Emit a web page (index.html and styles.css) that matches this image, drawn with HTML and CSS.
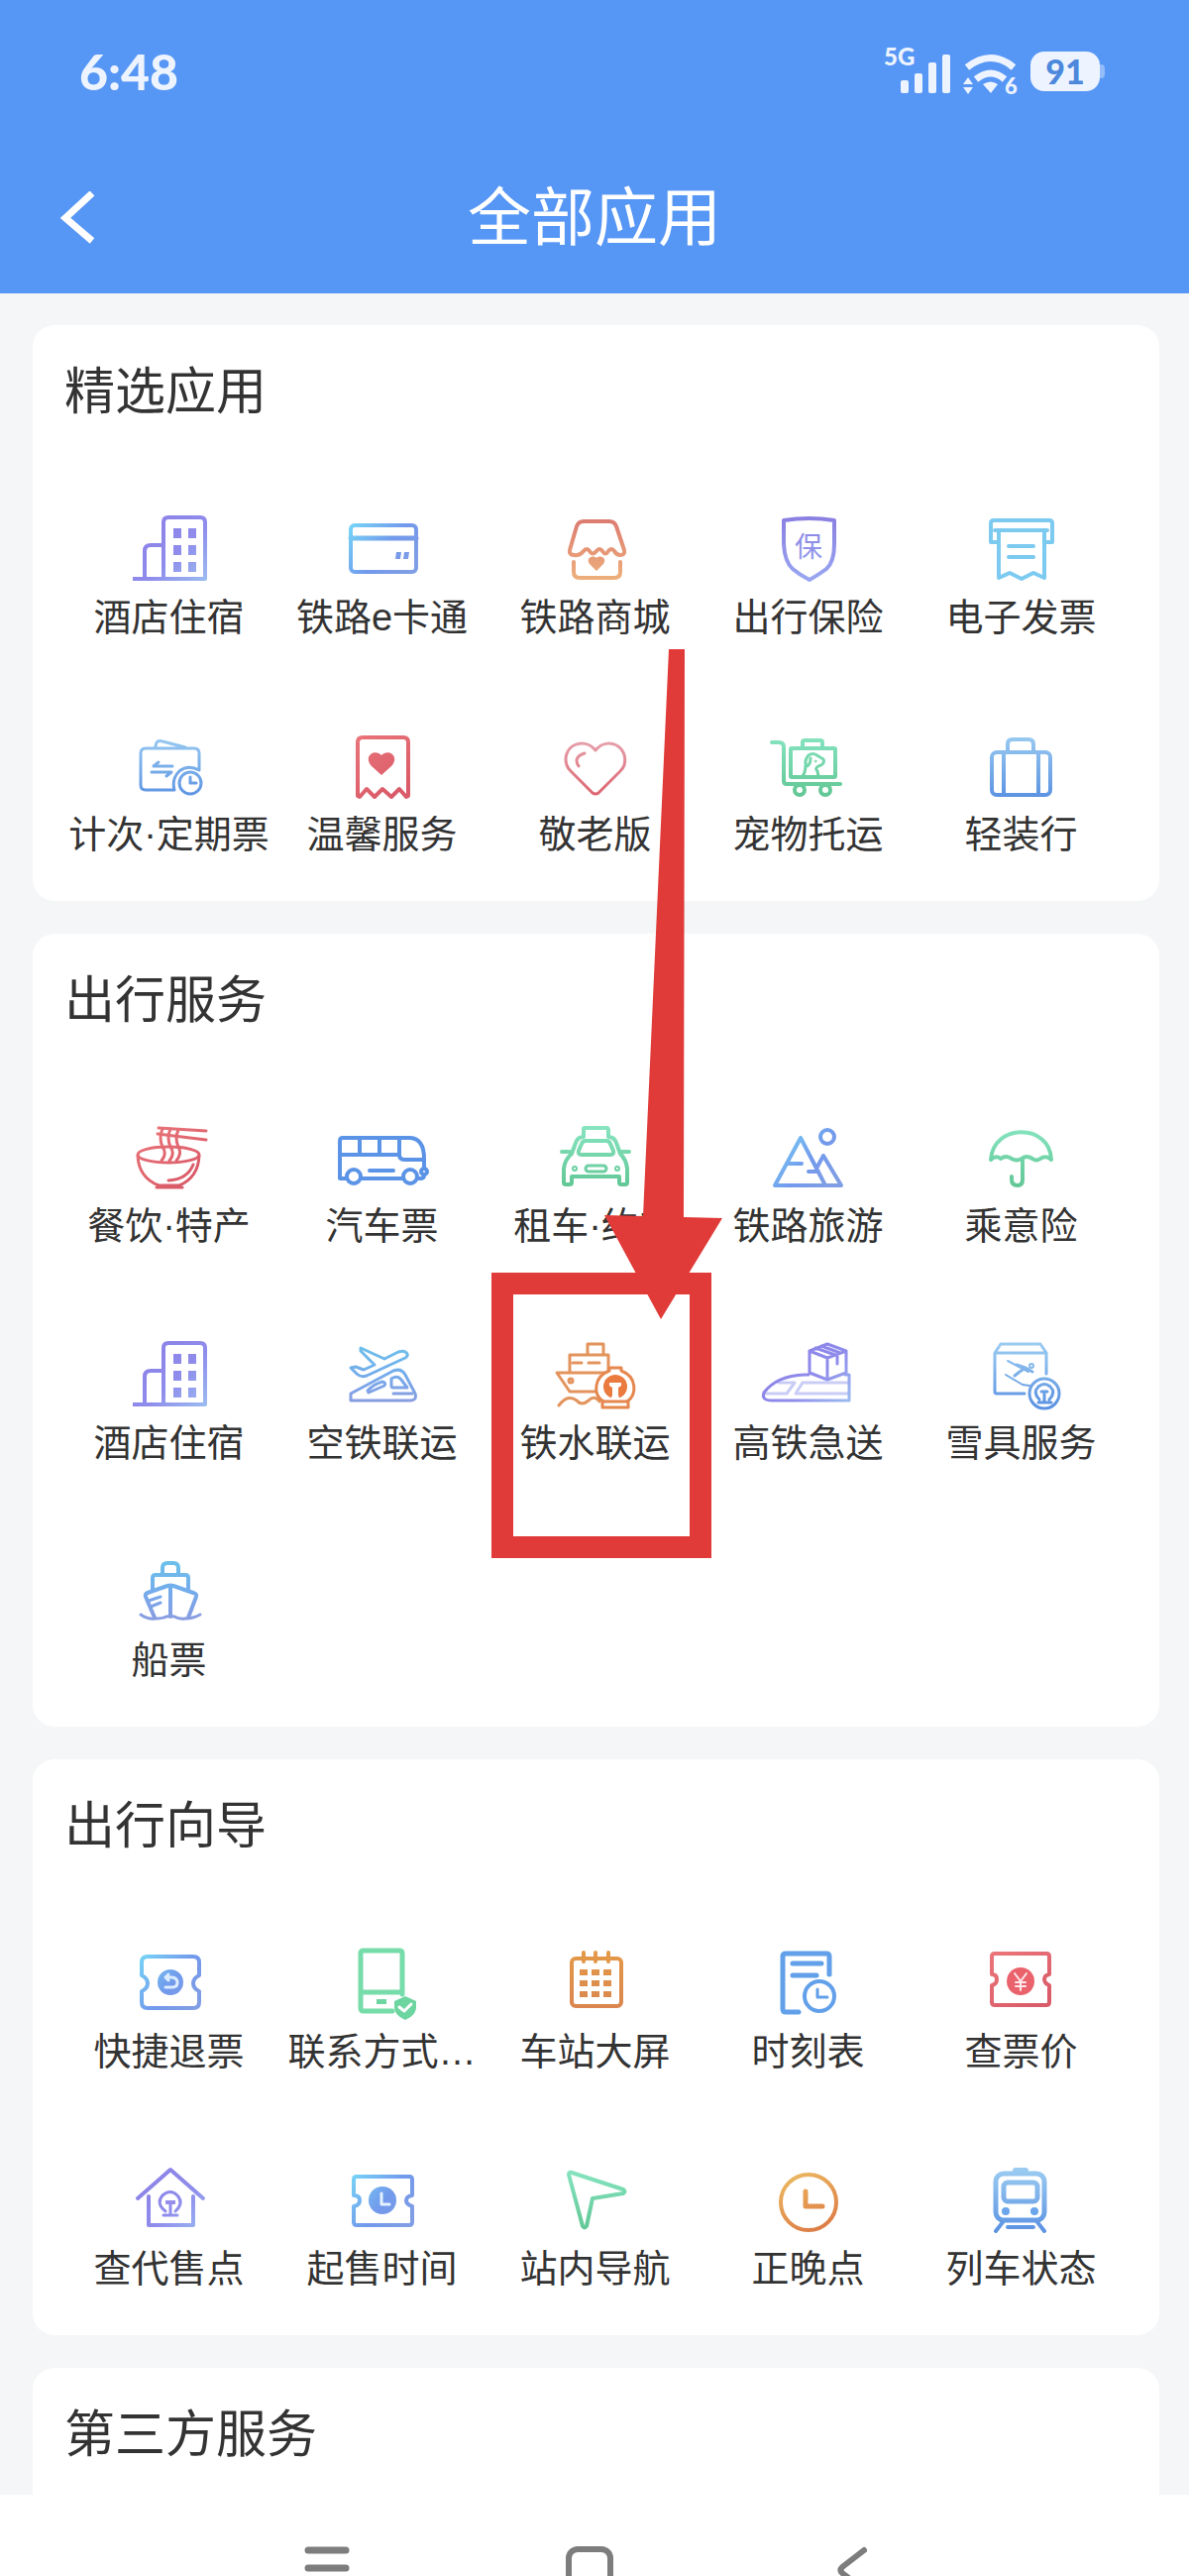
FILE: index.html
```html
<!DOCTYPE html>
<html lang="zh-CN">
<head>
  <meta charset="UTF-8">
  <meta name="viewport" content="width=device-width, initial-scale=1">
  <title>全部应用</title>
  <link rel="stylesheet" href="styles.css">
</head>
<body>
  <!-- shared gradients and symbols -->
  <svg class="defs" width="0" height="0" aria-hidden="true">
    <defs>
      <linearGradient id="purple" gradientUnits="userSpaceOnUse" x1="30" y1="10" x2="90" y2="75"><stop offset="0" stop-color="#8c82e6"/><stop offset=".5" stop-color="#8f8cec"/><stop offset="1" stop-color="#9cc0f0"/></linearGradient>
      <linearGradient id="violet" gradientUnits="userSpaceOnUse" x1="0" y1="10" x2="0" y2="75"><stop offset="0" stop-color="#8a80e2"/><stop offset="1" stop-color="#9aa8f2"/></linearGradient>
      <linearGradient id="cyanblue" gradientUnits="userSpaceOnUse" x1="20" y1="20" x2="75" y2="65"><stop offset="0" stop-color="#76cff5"/><stop offset=".55" stop-color="#7299ec"/><stop offset="1" stop-color="#809ee4"/></linearGradient>
      <linearGradient id="coral" gradientUnits="userSpaceOnUse" x1="0" y1="10" x2="0" y2="72"><stop offset="0" stop-color="#dc7a70"/><stop offset="1" stop-color="#eeb07c"/></linearGradient>
      <linearGradient id="sky" gradientUnits="userSpaceOnUse" x1="0" y1="10" x2="0" y2="72"><stop offset="0" stop-color="#9acbf1"/><stop offset="1" stop-color="#5c93e2"/></linearGradient>
      <linearGradient id="red" gradientUnits="userSpaceOnUse" x1="20" y1="10" x2="60" y2="72"><stop offset="0" stop-color="#ea7579"/><stop offset="1" stop-color="#d95a68"/></linearGradient>
      <linearGradient id="pink" gradientUnits="userSpaceOnUse" x1="0" y1="16" x2="0" y2="70"><stop offset="0" stop-color="#e6a0ac"/><stop offset="1" stop-color="#dc6670"/></linearGradient>
      <linearGradient id="green" gradientUnits="userSpaceOnUse" x1="0" y1="10" x2="0" y2="70"><stop offset="0" stop-color="#86e4c0"/><stop offset="1" stop-color="#62c795"/></linearGradient>
      <linearGradient id="aqua" gradientUnits="userSpaceOnUse" x1="0" y1="12" x2="0" y2="68"><stop offset="0" stop-color="#6cc0ea"/><stop offset=".5" stop-color="#74acec"/><stop offset="1" stop-color="#889ce2"/></linearGradient>
      <linearGradient id="orange" gradientUnits="userSpaceOnUse" x1="30" y1="10" x2="60" y2="72"><stop offset="0" stop-color="#ecbc62"/><stop offset="1" stop-color="#dd7c45"/></linearGradient>
      <linearGradient id="amber" gradientUnits="userSpaceOnUse" x1="0" y1="8" x2="0" y2="68"><stop offset="0" stop-color="#e49a48"/><stop offset="1" stop-color="#d98550"/></linearGradient>
    </defs>
    <symbol id="hotel" viewBox="0 0 100 80">
      <path stroke-linecap="butt" d="M13 71H86V14Q86 9 81 9H49Q44 9 44 14V71M44 37H31Q25 37 25 43V71"/>
      <path fill="url(#purple)" stroke="none" d="M54 20h8v10h-8zM69 20h8v10h-8zM54 37h8v10h-8zM69 37h8v10h-8zM54 54h8v10h-8zM69 54h8v10h-8z"/>
    </symbol>
  </svg>

  <header class="header">
    <div class="status-bar">
      <span class="time">6:48</span>
      <div class="status-icons">
        <svg width="68" height="56" viewBox="0 0 68 56" fill="#edf4ff">
          <text class="net-type" x="0" y="22">5G</text>
          <rect x="17" y="37" width="8" height="13" rx="2"/><rect x="31" y="30" width="8" height="20" rx="2"/><rect x="45" y="19" width="8" height="31" rx="2"/><rect x="59" y="11" width="8" height="39" rx="2"/>
        </svg>
        <svg width="56" height="56" viewBox="0 0 56 56" fill="#edf4ff">
          <path fill="none" stroke="#edf4ff" stroke-width="7" d="M4 24Q28 5 51 24M13 36Q28 24 42 36"/>
          <path d="M20 41Q28 36 35 41L28 50zM0 41L5 34L10 41zM0 44H10L5 51z"/>
          <text class="wifi-gen" x="42" y="51">6</text>
        </svg>
        <span class="battery">91</span>
      </div>
    </div>
    <div class="title-bar">
      <button class="back" type="button" aria-label="返回">
        <svg width="36" height="54" viewBox="0 0 36 54" fill="none" stroke="#fff" stroke-width="7"><path d="M33 2L6 27L33 50"/></svg>
      </button>
      <h1>全部应用</h1>
    </div>
  </header>

  <main class="content">
    <section class="card">
      <h2>精选应用</h2>
      <div class="app-grid">
        <a class="app" href="#">
          <svg class="icon" viewBox="0 0 100 80" stroke="url(#purple)"><use href="#hotel"/></svg>
          <span>酒店住宿</span>
        </a>
        <a class="app" href="#">
          <svg class="icon" viewBox="0 0 100 80" stroke="url(#cyanblue)">
            <rect x="18" y="17" width="66" height="47" rx="4"/><path stroke-width="5" d="M18 30H84"/>
            <path fill="url(#cyanblue)" stroke="none" d="M64 44h5l-1 7h-5zM72 44h5l-1 7h-5z"/>
          </svg>
          <span>铁路e卡通</span>
        </a>
        <a class="app" href="#">
          <svg class="icon" viewBox="0 0 100 80" stroke="url(#coral)">
            <path d="M38 13H64Q69 13 71 18L79 42Q80 47 75 47Q71 47 69 43Q66 39 63 43Q60 48 57 43Q54 39 51 43Q47 48 44 43Q41 39 38 43Q34 48 29 47Q23 47 24 42L31 18Q33 13 38 13Z"/>
            <path d="M28 54V64Q28 70 34 70H69Q75 70 75 64V54"/>
            <path fill="url(#coral)" stroke="none" d="M51 63L44 56C40 51 46 46 51 50C56 46 62 51 58 56Z"/>
          </svg>
          <span>铁路商城</span>
        </a>
        <a class="app" href="#">
          <svg class="icon" viewBox="0 0 100 80" stroke="url(#violet)">
            <path d="M25 12Q51 8 76 12V36Q76 54 68 61Q60 67 51 72Q41 67 34 61Q26 54 25 36Z"/>
            <text class="seal" x="50" y="49" fill="url(#violet)">保</text>
          </svg>
          <span>出行保险</span>
        </a>
        <a class="app" href="#">
          <svg class="icon" viewBox="0 0 100 80" stroke="#7dcaf1">
            <path d="M26 34H19V15Q19 12 22 12H78Q81 12 81 15V34H74M23 22H76M37 38H62M37 49H62"/>
            <path d="M27 22V70L38 65L50 71L62 65L73 70V22"/>
          </svg>
          <span>电子发票</span>
        </a>
        <a class="app" href="#">
          <svg class="icon thin" viewBox="0 0 100 80" stroke="url(#sky)">
            <path d="M80 45V28Q80 23 75 23H26Q21 23 21 28V60Q21 65 26 65H55Q52 54 60 46Q69 39 80 45M36 22Q36 14 43 16L66 22"/>
            <path d="M53 41H34L39 37M32 47H52L47 51"/>
            <circle cx="71" cy="58" r="11"/><path d="M71 52V58H77"/>
          </svg>
          <span>计次·定期票</span>
        </a>
        <a class="app" href="#">
          <svg class="icon" viewBox="0 0 100 80" stroke="url(#red)">
            <path d="M25 71V17Q25 12 30 12H71Q76 12 76 17V71L74 72L67 64L59 72L50 64L42 72L34 64L27 72Z"/>
            <path fill="url(#red)" stroke="none" d="M49 50L39 41C30 31 42 23 49 30C56 23 68 31 59 41Z"/>
          </svg>
          <span>温馨服务</span>
        </a>
        <a class="app" href="#">
          <svg class="icon thin" viewBox="0 0 100 80" stroke="url(#pink)">
            <path d="M50 25C38 10 15 21 21 40Q22 43 25 46L47 68Q50 70 53 68L75 46Q78 43 79 40C84 21 62 10 50 25Z"/>
            <path d="M39 28Q27 32 33 41"/>
          </svg>
          <span>敬老版</span>
        </a>
        <a class="app" href="#">
          <svg class="icon" viewBox="0 0 100 80" stroke="url(#green)">
            <path d="M13 17H20Q25 17 25 22V56Q25 59 28 59H82"/>
            <rect x="32" y="23" width="45" height="29" rx="1"/><path d="M44 22V17Q44 15 46 15H62Q64 15 64 17V22"/>
            <circle cx="41" cy="65" r="5"/><circle cx="67" cy="65" r="5"/>
            <path stroke-width="3" d="M44 51Q47 47 47 40M50 30Q45 36 48 41Q52 40 52 33M49 31Q54 26 60 31L65 34Q67 39 60 41Q56 43 59 46L60 51"/>
            <circle cx="57" cy="36" r="1" stroke-width="1"/>
          </svg>
          <span>宠物托运</span>
        </a>
        <a class="app" href="#">
          <svg class="icon" viewBox="0 0 100 80" stroke="url(#sky)">
            <rect x="20" y="27" width="59" height="43" rx="5"/><path d="M32 27V70M67 27V70M36 27V19Q36 14 41 14H57Q62 14 62 19V27"/>
          </svg>
          <span>轻装行</span>
        </a>
      </div>
    </section>

    <section class="card">
      <h2>出行服务</h2>
      <div class="app-grid">
        <a class="app" href="#">
          <svg class="icon thin" viewBox="0 0 100 80" stroke="url(#red)">
            <ellipse cx="49" cy="38" rx="31" ry="8"/><path d="M18 39Q19 61 39 69H60Q79 61 80 39M49 64Q68 63 74 48M39 11L87 14M38 17L87 23"/>
            <path d="M37 71H63"/>
            <path d="M43 12Q39 21 43 30Q48 37 42 44M51 12Q47 21 51 30Q56 37 50 44M59 13Q55 21 59 30Q63 37 57 44"/>
          </svg>
          <span>餐饮·特产</span>
        </a>
        <a class="app" href="#">
          <svg class="icon" viewBox="0 0 100 80" stroke="#5b94e6">
            <path d="M13 62H7V24Q7 21 10 21H78Q92 22 92 42V50M92 59Q92 62 88 62H86M29 62H70M7 38H67M27 21V38M47 21V38M67 21V38Q67 43 72 43H92M37 54H61"/>
            <circle cx="21" cy="60" r="7"/><circle cx="78" cy="60" r="7"/><circle cx="92" cy="55" r="3"/>
          </svg>
          <span>汽车票</span>
        </a>
        <a class="app" href="#">
          <svg class="icon" viewBox="0 0 100 80" stroke="url(#green)">
            <path d="M38 20V12Q38 11 39 11H61Q63 11 63 13V20Q69 20 71 26L75 37Q81 43 82 52V66Q82 68 80 68H76Q74 68 74 66V60H26V66Q26 68 24 68H20Q18 68 18 66V52Q19 43 26 37L30 26Q32 20 38 20Z"/>
            <path d="M16 35H24M76 35H84"/>
            <path d="M40 24H61Q64 24 65 27L68 34Q69 38 65 38H36Q32 38 33 34L36 27Q37 24 40 24Z"/>
            <rect x="40" y="49" width="21" height="6" rx="3" stroke-width="3"/><circle cx="29" cy="52" r="2" stroke-width="2"/><circle cx="72" cy="52" r="2" stroke-width="2"/>
          </svg>
          <span>租车·约车</span>
        </a>
        <a class="app" href="#">
          <svg class="icon" viewBox="0 0 100 80" stroke="url(#cyanblue)">
            <path d="M42 21L16 69H83L65 39L59 50M42 21L67 69M30 47H43M50 55H60"/><circle cx="69" cy="20" r="7"/>
          </svg>
          <span>铁路旅游</span>
        </a>
        <a class="app" href="#">
          <svg class="icon" viewBox="0 0 100 80" stroke="url(#green)">
            <path d="M19 43C21 6 79 6 80 43Q75 38 69 42Q65 45 61 42Q55 38 50 42Q45 45 40 42Q34 38 29 42Q24 38 19 43ZM51 43V63Q51 69 46 69Q40 69 40 63V60"/>
          </svg>
          <span>乘意险</span>
        </a>
        <a class="app" href="#">
          <svg class="icon" viewBox="0 0 100 80" stroke="url(#purple)"><use href="#hotel"/></svg>
          <span>酒店住宿</span>
        </a>
        <a class="app" href="#">
          <svg class="icon thin" viewBox="0 0 100 80" stroke="url(#aqua)">
            <path d="M28 14L52 25L66 18Q73 16 75 20Q76 22 73 24L34 42Q28 44 24 40L18 34L23 33L31 36L42 31L28 17Z"/>
            <path d="M18 67V60L61 37Q69 34 73 41L83 60Q85 67 78 67Z"/>
            <path d="M59 45Q65 41 69 46L75 54H61Q59 54 59 52ZM35 57Q42 50 50 48Q54 49 52 52L36 59Z"/>
            <path d="M61 60H80"/>
          </svg>
          <span>空铁联运</span>
        </a>
        <a class="app" href="#">
          <svg class="icon thin" viewBox="0 0 100 80" stroke="#e3935c">
            <path d="M63 37V21H24V38M42 20V10H58V20M60 39H11L24 58H50M27 29H36M43 29H54M13 72Q22 60 31 67Q36 73 43 67Q49 61 54 68"/>
            <circle cx="25" cy="47" r="2"/>
            <path stroke="#e6874e" fill="#fff" d="M64 34H76V37C92 43 92 61 82 68H83V74H57V68H58C47 61 48 43 64 37Z"/>
            <circle cx="70" cy="53" r="12" stroke="none" fill="#eb7a3e"/>
            <path stroke="none" fill="#fff" d="M64 49H76V52L73 54V61Q73 64 77 67H63Q67 64 67 61V54L64 52Z"/>
            <path stroke="#e6874e" d="M58 68H82"/>
          </svg>
          <span>铁水联运</span>
          <!-- highlight frame and pointer -->
          <i class="mark-frame"></i>
          <svg class="mark-arrow" width="120" height="676" viewBox="0 0 120 676"><path fill="#e13b39" d="M65 0H81L80 573L119 574L57 676L0 571L39 572Z"/></svg>
        </a>
        <a class="app" href="#">
          <svg class="icon thin" viewBox="0 0 100 80" stroke="url(#purple)">
            <path stroke="#c9cdf6" d="M20 49H36L28 60H7M91 49H44L37 60H91"/>
            <path d="M50 41H46Q18 42 5 59Q2 67 13 67H91V41H87"/>
            <path d="M69 10L88 17V39L69 46L51 39V17ZM51 17L69 24L88 17M69 24V45M57 14L77 21M63 12L82 19M79 22V30"/>
          </svg>
          <span>高铁急送</span>
        </a>
        <a class="app" href="#">
          <svg class="icon thin" viewBox="0 0 100 80" stroke="url(#sky)">
            <path d="M53 60H25Q23 60 23 58V19L29 10H69L75 19V40M23 19H75"/>
            <circle cx="73" cy="60" r="15"/>
            <path stroke-width="2" d="M36 27L57 38M34 41L51 51L58 52"/>
            <path stroke-width="3" d="M45 31L54 34L48 38L43 42M54 34L61 38"/><circle cx="60" cy="32" r="2" stroke-width="2"/>
            <path stroke-width="3" d="M68 66Q61 59 67 53Q73 48 79 53Q85 59 78 66M73 59V68M67 69H80M70 58H76"/>
          </svg>
          <span>雪具服务</span>
        </a>
        <a class="app" href="#">
          <svg class="icon" viewBox="0 0 100 80" stroke="url(#aqua)">
            <path d="M43 24V17Q43 12 48 12H54Q59 12 59 17V24M33 39V27Q33 24 36 24H66Q69 24 69 27V39M35 67L26 46Q25 43 28 42L48 35Q51 34 54 35L74 42Q78 43 77 46L69 67M51 35V66"/>
            <path stroke-width="3" d="M29 50L41 46M31 56L41 52M21 64Q28 69 36 68Q43 68 47 66Q51 65 55 66Q60 69 66 68Q74 68 81 64"/>
          </svg>
          <span>船票</span>
        </a>
      </div>
    </section>

    <section class="card">
      <h2>出行向导</h2>
      <div class="app-grid">
        <a class="app" href="#">
          <svg class="icon" viewBox="0 0 100 80" stroke="url(#cyanblue)">
            <path d="M28 14H74Q80 14 80 20V33Q74 36 74 41T80 49V60Q80 66 74 66H28Q22 66 22 60V49Q28 46 28 41T22 33V20Q22 14 28 14Z"/>
            <circle cx="51" cy="40" r="13" fill="url(#cyanblue)" stroke="none"/>
            <path stroke="#dcecff" stroke-width="3" d="M49 32L46 35L49 38M46 35H53Q58 36 58 40Q58 45 53 45H46"/>
          </svg>
          <span>快捷退票</span>
        </a>
        <a class="app" href="#">
          <svg class="icon" viewBox="0 0 100 80" stroke="#76dcaa">
            <path d="M60 69H31Q28 69 28 66V11Q28 8 31 8H67Q70 8 70 11V52M28 50H70" stroke-width="5"/>
            <path fill="#6dd5a0" stroke="none" d="M44 57h10v5h-10zM73 54L84 59V66Q83 74 73 78Q63 74 62 66V59Z"/>
            <path stroke="#fff" stroke-width="3" d="M67 65L72 69L79 62"/>
          </svg>
          <span>联系方式…</span>
        </a>
        <a class="app" href="#">
          <svg class="icon" viewBox="0 0 100 80" stroke="url(#amber)">
            <rect x="26" y="16" width="50" height="48" rx="4"/><path d="M38 10V19M50 10V19M63 10V19"/>
            <path stroke-width="6" stroke-linecap="butt" stroke-dasharray="8 4" d="M34 30H66M34 41H66M34 52H66"/>
          </svg>
          <span>车站大屏</span>
        </a>
        <a class="app" href="#">
          <svg class="icon" viewBox="0 0 100 80" stroke="#63a0ea">
            <path d="M40 70H27Q24 70 24 67V14Q24 11 27 11H68Q71 11 71 14V32M34 21H63M34 33H58" stroke-width="5"/><circle cx="61" cy="54" r="15"/><path d="M59 47V55H69" stroke-width="3"/>
          </svg>
          <span>时刻表</span>
        </a>
        <a class="app" href="#">
          <svg class="icon" viewBox="0 0 100 80" stroke="url(#red)">
            <path d="M23 11H75Q78 11 78 14V32Q73 33 73 37T78 43V60Q78 63 75 63H23Q20 63 20 60V43Q25 42 25 37T20 32V14Q20 11 23 11Z"/>
            <circle cx="49" cy="39" r="14" fill="#ea626c" stroke="none"/>
            <path stroke="#ffe8ea" stroke-width="2" d="M43 31L49 39L55 31M49 39V48M44 40H54M44 44H54"/>
          </svg>
          <span>查票价</span>
        </a>
        <a class="app" href="#">
          <svg class="icon" viewBox="0 0 100 80" stroke="url(#purple)">
            <path d="M18 39L51 10L84 39M29 37V66H74V37"/>
            <path stroke-width="3" d="M46 52Q36 44 43 36Q51 29 58 36Q65 44 56 52M51 45V55M44 56H58"/><path fill="#958eea" stroke="none" d="M46 41h10v4h-10z"/>
          </svg>
          <span>查代售点</span>
        </a>
        <a class="app" href="#">
          <svg class="icon" viewBox="0 0 100 80" stroke="url(#cyanblue)">
            <path d="M24 17H77Q80 17 80 20V36Q74 37 74 41T80 47V63Q80 66 77 66H24Q21 66 21 63V47Q27 46 27 41T21 36V20Q21 17 24 17Z"/>
            <circle cx="50" cy="41" r="14" fill="url(#cyanblue)" stroke="none"/><path stroke="#e4f1ff" stroke-width="3" d="M49 34V45H57"/>
          </svg>
          <span>起售时间</span>
        </a>
        <a class="app" href="#">
          <svg class="icon" viewBox="0 0 100 80" stroke="url(#green)">
            <path d="M26 13L78 30Q81 32 78 34L47 39L41 67Q39 70 37 67L23 15Q23 12 26 13Z"/>
          </svg>
          <span>站内导航</span>
        </a>
        <a class="app" href="#">
          <svg class="icon" viewBox="0 0 100 80" stroke="url(#orange)">
            <circle cx="50" cy="43" r="28"/><path stroke-width="5" d="M47 32V47H64"/>
          </svg>
          <span>正晚点</span>
        </a>
        <a class="app" href="#">
          <svg class="icon" viewBox="0 0 100 80" stroke="url(#sky)">
            <g stroke-width="5"><rect x="24" y="14" width="49" height="47" rx="8"/><rect x="32" y="23" width="34" height="19" rx="4"/></g>
            <path d="M44 11H54" stroke-width="6"/><path d="M31 63L24 72M66 63L73 72M36 68H62"/>
            <circle cx="34" cy="52" r="4" fill="#6ba5ec" stroke="none"/><circle cx="63" cy="52" r="4" fill="#6ba5ec" stroke="none"/>
          </svg>
          <span>列车状态</span>
        </a>
      </div>
    </section>

    <section class="card card-last">
      <h2>第三方服务</h2>
    </section>
  </main>

  <nav class="system-nav">
    <button type="button" aria-label="菜单">
      <svg width="46" height="50" viewBox="0 0 46 50" stroke="#7d7d7d" stroke-width="7" stroke-linecap="round"><path d="M4 5H42M4 23H42M4 41H42"/></svg>
    </button>
    <button type="button" aria-label="主屏幕">
      <svg width="48" height="50" viewBox="0 0 48 50" fill="none" stroke="#7d7d7d" stroke-width="6"><rect x="3" y="4" width="42" height="42" rx="9"/></svg>
    </button>
    <button type="button" aria-label="后退">
      <svg width="32" height="50" viewBox="0 0 32 50" fill="none" stroke="#7d7d7d" stroke-width="6" stroke-linecap="round" stroke-linejoin="round"><path d="M28 5L6 22Q3 25 6 28L28 45"/></svg>
    </button>
  </nav>
</body>
</html>
```

FILE: styles.css
```css
:root {
  --primary: #5696f5;
  --bg: #f4f6f8;
  --text: #333333;
  --mark: #e13b39;
}

* {
  box-sizing: border-box;
  margin: 0;
  padding: 0;
}

body {
  display: flex;
  flex-direction: column;
  height: 100vh;
  overflow: hidden;
  font-family: "Liberation Sans", "Noto Sans CJK SC", sans-serif;
  background: var(--bg);
  color: var(--text);
}

button {
  border: none;
  background: none;
  cursor: pointer;
}

svg {
  display: block;
}

.defs {
  position: absolute;
}

/* header */
.header {
  flex: none;
  background: var(--primary);
  color: #fff;
}

.status-bar {
  display: flex;
  justify-content: space-between;
  align-items: center;
  height: 144px;
  padding: 0 90px 0 80px;
}

.time {
  font-family: Lato, sans-serif;
  font-size: 50px;
  font-weight: 900;
  color: #edf4ff;
}

.status-icons {
  display: flex;
  align-items: center;
  gap: 12px;
}

.net-type,
.wifi-gen {
  font-family: Lato, sans-serif;
  font-size: 24px;
  font-weight: 900;
}

.wifi-gen {
  font-size: 22px;
}

.battery {
  position: relative;
  width: 70px;
  border-radius: 14px;
  background: #edf4ff;
  color: #4c88dc;
  font-family: Lato, sans-serif;
  font-size: 34px;
  font-weight: 900;
  line-height: 40px;
  text-align: center;
}

.battery::after {
  content: "";
  position: absolute;
  top: 13px;
  left: 70px;
  width: 5px;
  height: 14px;
  border-radius: 0 4px 4px 0;
  background: #94bcf9;
}

.title-bar {
  display: grid;
  grid-template-columns: 1fr auto 1fr;
  align-items: center;
  height: 152px;
  padding: 0 60px;
}

.title-bar h1 {
  font-size: 64px;
  font-weight: 400;
  line-height: 96px;
}

.back {
  justify-self: start;
}

/* cards */
.content {
  flex: 1;
  display: flex;
  flex-direction: column;
  gap: 33px;
  min-height: 0;
  padding: 32px 30px 0 33px;
  overflow: hidden;
}

.card {
  flex: none;
  padding: 33px 32px 43px 30px;
  border-radius: 22px;
  background: #fff;
}

.card-last {
  flex: 1;
  border-radius: 22px 22px 0 0;
}

.card h2 {
  padding-left: 2px;
  font-size: 51px;
  font-weight: 400;
  line-height: 70px;
}

.app-grid {
  display: grid;
  grid-template-columns: repeat(5, 1fr);
  row-gap: 85px;
  margin-top: 82px;
}

.app {
  position: relative;
  display: flex;
  flex-direction: column;
  align-items: center;
  gap: 6px;
  color: inherit;
  font-size: 38px;
  line-height: 48px;
  text-decoration: none;
  white-space: nowrap;
}

.icon {
  width: 100px;
  height: 80px;
  overflow: visible;
  fill: none;
  stroke-width: 4;
  stroke-linecap: round;
  stroke-linejoin: round;
}

.icon.thin {
  stroke-width: 3;
}

.seal {
  font-size: 28px;
  stroke: none;
  text-anchor: middle;
}

.mark-frame {
  position: absolute;
  top: -62px;
  left: 3px;
  z-index: 1;
  width: 222px;
  height: 288px;
  border: 22px solid var(--mark);
}

.mark-arrow {
  position: absolute;
  top: -691px;
  left: 117px;
  z-index: 1;
}

/* bottom navigation */
.system-nav {
  flex: none;
  display: flex;
  justify-content: center;
  height: 82px;
  padding: 51px 10px 0 0;
  background: #fff;
  overflow: hidden;
}

.system-nav button {
  display: flex;
  justify-content: center;
  width: 265px;
  height: 50px;
}
```
